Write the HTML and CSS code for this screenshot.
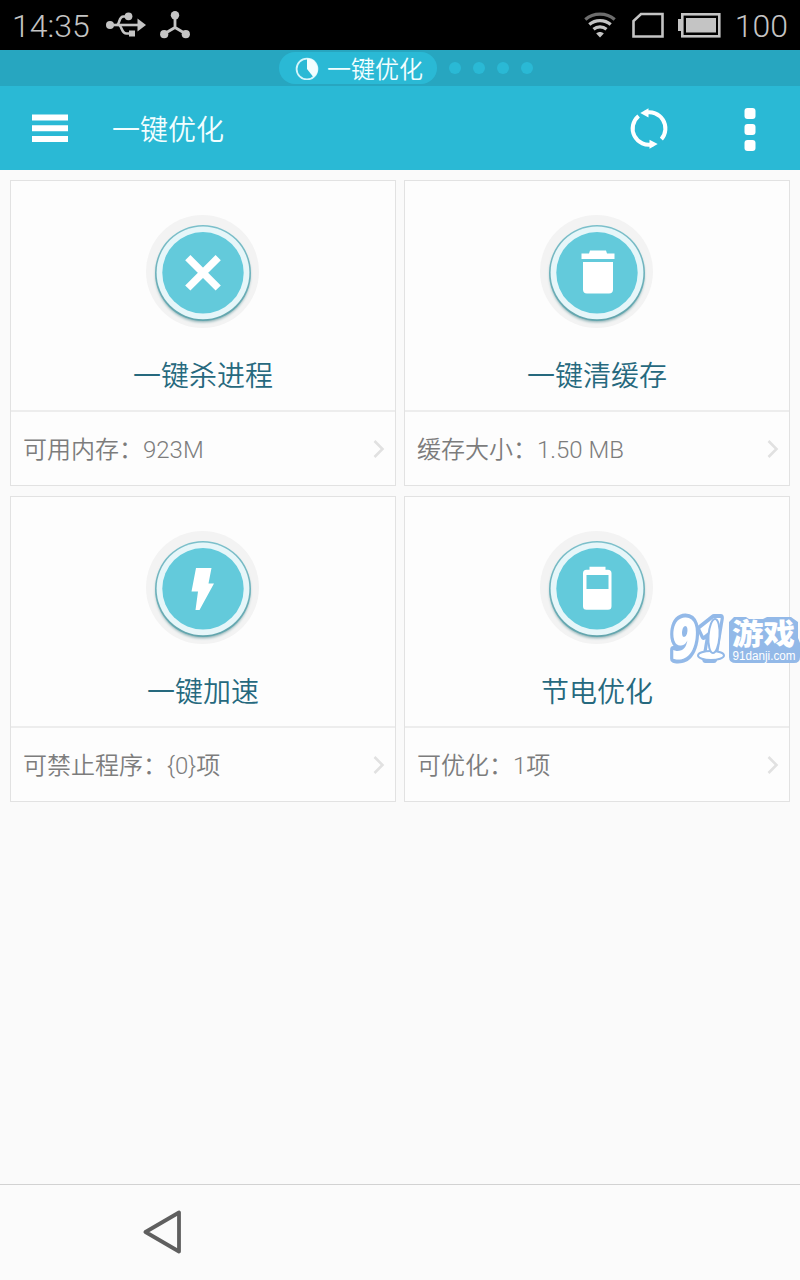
FILE: index.html
```html
<!DOCTYPE html>
<html lang="zh-CN">
<head>
    <meta charset="UTF-8">
    <meta name="viewport" content="width=device-width, initial-scale=1.0">
    <title>一键优化</title>
    <link rel="stylesheet" href="styles.css">
</head>
<body>
    <!-- Shared icon shapes -->
    <svg class="defs" width="0" height="0">
        <defs>
            <linearGradient id="rim" x1="0" y1="0" x2="0" y2="1">
                <stop offset="0" stop-color="#7cc0cb"/>
                <stop offset="1" stop-color="#62a5ad"/>
            </linearGradient>
            <filter id="soft" x="-20%" y="-20%" width="140%" height="140%">
                <feGaussianBlur stdDeviation="1.5"/>
            </filter>
        </defs>
        <symbol id="ring" viewBox="0 0 114 114">
            <circle cx="56.500" cy="56.500" r="56.500" fill="#f3f3f3"/>
            <circle cx="57" cy="60" r="47" fill="#7fa9ad" filter="url(#soft)"/>
            <circle cx="57" cy="58" r="48" fill="url(#rim)"/>
            <circle cx="57" cy="57.800" r="46.400" fill="#e6f6f9"/>
            <circle cx="57" cy="57.800" r="40.700" fill="#63cadb"/>
        </symbol>
        <symbol id="arrow" viewBox="0 0 12 20">
            <path d="M1.500 2 9.500 10 1.500 18" fill="none" stroke="#e1e1e1" stroke-width="2.600"/>
        </symbol>
    </svg>

    <div class="screen">
        <!-- Status bar -->
        <div class="status-bar">
            <span class="time">14:35</span>
            <svg class="usb" width="40" height="26" viewBox="0 0 40 26">
                <g fill="none" stroke="#c4c4c4" stroke-width="2.600">
                    <path d="M4 13h29"/>
                    <path d="M11 13c3-1 1.500-8.500 6.500-8.500H22"/>
                    <path d="M13 13c3 1 2.500 8.500 7.500 8.500H25"/>
                </g>
                <g fill="#c4c4c4">
                    <circle cx="4" cy="13" r="4"/>
                    <circle cx="22.500" cy="4.300" r="3.900"/>
                    <rect x="23" y="18.500" width="6" height="6"/>
                    <path d="M31.500 6.500 40 13l-8.500 6.500z"/>
                </g>
            </svg>
            <svg class="node" width="30" height="28" viewBox="0 0 30 28">
                <path d="M15 4v12.500M4 23l11-6.500L26 23" fill="none" stroke="#c4c4c4" stroke-width="2.800"/>
                <g fill="#c4c4c4">
                    <circle cx="15" cy="4.200" r="4.200"/>
                    <circle cx="4.200" cy="23.200" r="4.100"/>
                    <circle cx="25.800" cy="23.200" r="4.100"/>
                </g>
            </svg>
            <span class="spacer"></span>
            <svg class="wifi" width="32" height="26" viewBox="0 0 32 26">
                <g fill="none" stroke="#c4c4c4" stroke-width="3.200">
                    <path d="M1.300 7.500C9.500.3 22.500.3 30.700 7.500" stroke="#6d6d6d"/>
                    <path d="M5.300 12.500c6-5.300 15.400-5.300 21.400 0"/>
                    <path d="M9.500 17.300c3.700-3.200 9.300-3.200 13 0"/>
                </g>
                <path d="M12.200 21.500c2.200-2 5.400-2 7.600 0L16 25.500z" fill="#c4c4c4"/>
            </svg>
            <svg class="sim" width="32" height="26" viewBox="0 0 32 26">
                <path d="M9 2h21.500v22.500h-29V9z" fill="none" stroke="#c4c4c4" stroke-width="2.600"/>
            </svg>
            <svg class="battery" width="43" height="26" viewBox="0 0 43 26">
                <rect x="4.300" y="2.300" width="37" height="22" fill="none" stroke="#c4c4c4" stroke-width="2.600"/>
                <path d="M0 7h4v12H0zM8 6h30v14.500H8z" fill="#c4c4c4"/>
            </svg>
            <span class="percent">100</span>
        </div>

        <!-- Page indicator -->
        <div class="pager">
            <div class="pager-current">
                <svg width="24" height="24" viewBox="0 0 24 24">
                    <circle cx="12" cy="13" r="10.400" fill="none" stroke="#d4f5fb" stroke-width="1.800"/>
                    <path d="M12 2.500A10.500 10.500 0 0 1 18.500 21.200L12 13z" fill="#f2feff"/>
                </svg>
                <span>一键优化</span>
            </div>
            <i class="dot"></i>
            <i class="dot"></i>
            <i class="dot"></i>
            <i class="dot"></i>
        </div>

        <!-- Title bar -->
        <div class="title-bar">
            <svg class="menu" width="36" height="28" viewBox="0 0 36 28">
                <path d="M0 .5h36v6H0zM0 11.200h36v6H0zM0 22h36v6H0z" fill="#fff"/>
            </svg>
            <h1>一键优化</h1>
            <svg class="refresh" width="40" height="44" viewBox="0 0 40 44">
                <g fill="none" stroke="#fff" stroke-width="4">
                    <path d="M16 6.800A16.200 16.200 0 0 1 32.400 33.100"/>
                    <path d="M24 38.200A16.200 16.200 0 0 1 9.600 10"/>
                </g>
                <path d="M11.300 7 19.500 2.300v9.200zM28.700 38 20.500 42.800v-9z" fill="#fff"/>
            </svg>
            <svg class="more" width="12" height="44" viewBox="0 0 12 44">
                <g fill="#fff">
                    <rect x=".5" y="0" width="11" height="11" rx="3"/>
                    <rect x=".5" y="16" width="11" height="11" rx="3"/>
                    <rect x=".5" y="32" width="11" height="11" rx="3"/>
                </g>
            </svg>
        </div>

        <!-- Cards -->
        <div class="cards">
            <div class="card">
                <div class="card-main">
                    <svg width="114" height="114" viewBox="0 0 114 114">
                        <use href="#ring" width="114" height="114"/>
                        <path d="M41.800 42.600 72.200 73M72.200 42.600 41.800 73" stroke="#fff" stroke-width="7.400"/>
                    </svg>
                    <h2>一键杀进程</h2>
                </div>
                <div class="card-info">
                    <span>可用内存：923M</span>
                    <svg width="12" height="20"><use href="#arrow"/></svg>
                </div>
            </div>
            <div class="card">
                <div class="card-main">
                    <svg width="114" height="114" viewBox="0 0 114 114">
                        <use href="#ring" width="114" height="114"/>
                        <path d="M41.500 38.500H49l1-3h16l1 3h7.500V44h-33zM43 47h30v27.500a4 4 0 0 1-4 4H47a4 4 0 0 1-4-4z" fill="#fff"/>
                    </svg>
                    <h2>一键清缓存</h2>
                </div>
                <div class="card-info">
                    <span>缓存大小：1.50 MB</span>
                    <svg width="12" height="20"><use href="#arrow"/></svg>
                </div>
            </div>
            <div class="card">
                <div class="card-main">
                    <svg width="114" height="114" viewBox="0 0 114 114">
                        <use href="#ring" width="114" height="114"/>
                        <path d="M50 37h15.500l-3 15.500H68L53.500 79h-4L52 60.500h-6.500z" fill="#fff"/>
                    </svg>
                    <h2>一键加速</h2>
                </div>
                <div class="card-info">
                    <span>可禁止程序：{0}项</span>
                    <svg width="12" height="20"><use href="#arrow"/></svg>
                </div>
            </div>
            <div class="card">
                <div class="card-main">
                    <svg width="114" height="114" viewBox="0 0 114 114">
                        <use href="#ring" width="114" height="114"/>
                        <path d="M49.500 35.700h16v3H68a3.500 3.500 0 0 1 3.500 3.500v33a3.500 3.500 0 0 1-3.500 3.500H46.500A3.500 3.500 0 0 1 43 75.200v-33a3.500 3.500 0 0 1 3.500-3.500h3z" fill="#fff"/>
                        <rect x="46.500" y="44" width="22" height="14" fill="#63cadb"/>
                    </svg>
                    <h2>节电优化</h2>
                </div>
                <div class="card-info">
                    <span>可优化：1项</span>
                    <svg width="12" height="20"><use href="#arrow"/></svg>
                </div>
            </div>
        </div>

        <!-- Navigation bar -->
        <div class="nav-bar">
            <svg width="40" height="46" viewBox="0 0 40 46">
                <path d="M2.500 22 36 2.500v39z" fill="none" stroke="#5f5f5f" stroke-width="3.800" stroke-linejoin="round"/>
            </svg>
        </div>

        <!-- Site badge -->
        <svg class="badge" width="140" height="70" viewBox="0 0 140 70">
            <path d="M74 15h12l3 2h14l4-2h24l7 5v16l2 5v14q0 6-6 6H76q-7 0-7-6V20z" fill="#93b9e8"/>
            <text class="badge-num" x="11" y="57" textLength="52" lengthAdjust="spacingAndGlyphs">91</text>
            <ellipse cx="51" cy="53.500" rx="13" ry="4.500" fill="#fff" stroke="#93b9e8" stroke-width="2"/>
            <ellipse cx="54" cy="34" rx="5.500" ry="17" transform="rotate(4 54 34)" fill="#fff" stroke="#93b9e8" stroke-width="2"/>
            <text class="badge-name" x="72" y="43" textLength="63" lengthAdjust="spacingAndGlyphs">游戏</text>
            <text class="badge-site" x="72.500" y="58" textLength="63" lengthAdjust="spacingAndGlyphs">91danji.com</text>
        </svg>
    </div>
</body>
</html>
```
FILE: styles.css
```css
body {
    margin: 0;
    font-family: Roboto, "Noto Sans CJK SC", sans-serif;
    font-weight: 300;
    background: #fafafa;
}
svg {
    display: block;
    flex: none;
}
h1, h2 {
    margin: 0;
    font-weight: 350;
    font-size: 28px;
}
.defs {
    position: absolute;
}
.screen {
    position: relative;
    display: flex;
    flex-direction: column;
    width: 800px;
    height: 1280px;
    overflow: hidden;
}

/* status bar */
.status-bar {
    display: flex;
    align-items: center;
    height: 50px;
    padding: 0 12px;
    background: #000;
    color: #c4c4c4;
    font-size: 32px;
    line-height: 50px;
}
.status-bar span {
    padding-top: 1px;
}
.time {
    width: 94px;
}
.node {
    margin-left: 14px;
}
.spacer {
    flex: 1;
}
.sim {
    margin-left: 16px;
}
.battery {
    margin: 0 14px 0 14px;
}

/* page indicator */
.pager {
    display: flex;
    align-items: center;
    height: 36px;
    padding-left: 279px;
    background: #27a6c0;
}
.pager-current {
    display: flex;
    align-items: center;
    box-sizing: border-box;
    width: 158px;
    height: 32px;
    margin-right: 12px;
    padding-left: 16px;
    border-radius: 16px;
    background: #2ab9d5;
    color: #f2feff;
    font-size: 24px;
    line-height: 32px;
    white-space: nowrap;
}
.pager-current span {
    margin-left: 8px;
    padding-top: 3px;
    font-weight: 350;
}
.dot {
    width: 12px;
    height: 12px;
    margin-right: 12px;
    border-radius: 50%;
    background: #2ab9d5;
}

/* title bar */
.title-bar {
    display: flex;
    align-items: center;
    height: 84px;
    padding: 0 44px 0 32px;
    background: #2ab9d5;
    color: #f2feff;
}
.title-bar h1 {
    flex: 1;
    margin-left: 44px;
    padding-bottom: 1px;
}
.more {
    margin-left: 75px;
    padding-top: 3px;
}

/* cards */
.cards {
    display: grid;
    grid-template-columns: 1fr 1fr;
    grid-auto-rows: 306px;
    gap: 10px 8px;
    align-content: start;
    flex: 1;
    padding: 10px;
}
.card {
    box-sizing: border-box;
    display: flex;
    flex-direction: column;
    border: 1px solid #e2e2e2;
    background: #fdfdfd;
}
.card-main {
    display: flex;
    flex-direction: column;
    align-items: center;
    box-sizing: border-box;
    height: 229px;
    padding-top: 34px;
}
.card-main h2 {
    margin-top: 27px;
    color: #26697e;
    line-height: 42px;
}
.card-info {
    display: flex;
    align-items: center;
    justify-content: space-between;
    flex: 1;
    padding: 0 10px 0 12px;
    border-top: 2px solid #ededed;
    color: #7c7c7c;
    font-size: 24px;
    font-weight: 350;
}
.card-info span {
    padding-bottom: 2px;
}

/* navigation bar */
.nav-bar {
    display: flex;
    align-items: center;
    box-sizing: border-box;
    height: 96px;
    padding-left: 143px;
    border-top: 1px solid #d2d2d2;
    background: #fbfbfb;
}

/* site badge */
.badge {
    position: absolute;
    left: 660px;
    top: 602px;
}
.badge-num {
    font: italic 800 56px "Open Sans", sans-serif;
    fill: #fff;
    stroke: #93b9e8;
    stroke-width: 8px;
    stroke-linejoin: round;
    paint-order: stroke;
}
.badge-name {
    font: 900 29px "Noto Sans CJK SC", sans-serif;
    fill: #fff;
}
.badge-site {
    font: 400 12px "Liberation Sans", sans-serif;
    fill: #fff;
}
```
